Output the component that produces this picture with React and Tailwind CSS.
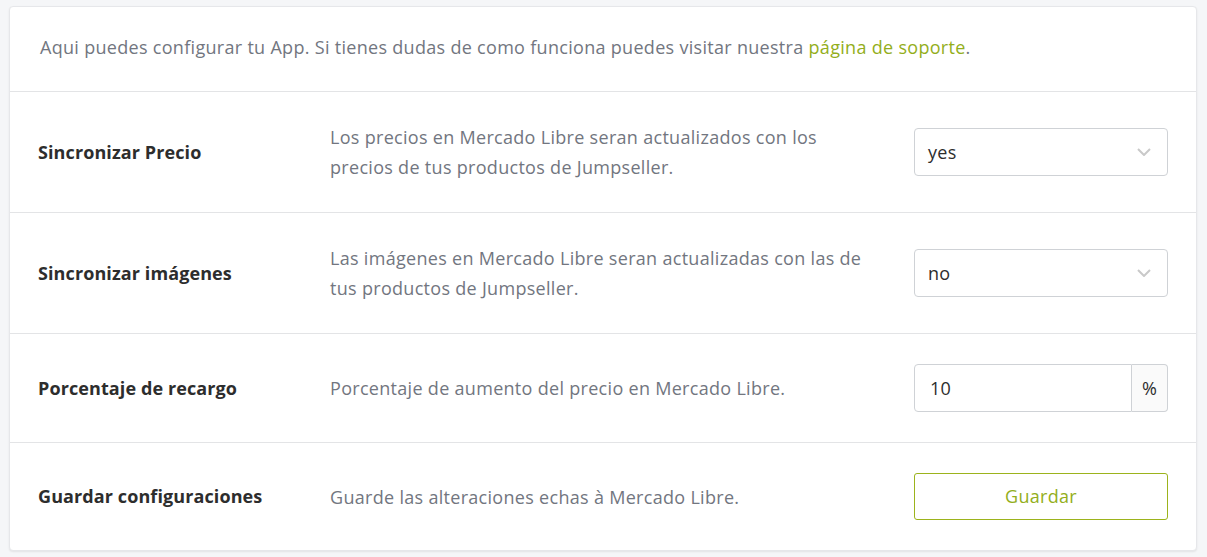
import React from "react";

const font = { fontFamily: "'Open Sans', Lato, sans-serif" };

function Chevron() {
  return (
    <svg width="14" height="8" viewBox="0 0 14 8" className="absolute right-[16px] top-1/2 -translate-y-1/2">
      <path d="M1 1l6 6 6-6" fill="none" stroke="#c9c9c9" strokeWidth="2" />
    </svg>
  );
}

function Select({ value }) {
  return (
    <div className="relative h-[48px] w-[254px] rounded-[4px] border border-[#cfd2d6] bg-white flex items-center pl-[13px] text-[18px] text-[#2d2d2d]">
      {value}
      <Chevron />
    </div>
  );
}

function Row({ label, desc, children, last }) {
  return (
    <div className={"flex items-center py-[30px] pl-[28px] pr-[28px] tracking-[0.3px] " + (last ? "" : "border-b border-[#e3e4e6]")}>
      <div className="w-[292px] shrink-0 text-[18px] font-bold tracking-[0.1px] text-[#2d2d2d]">{label}</div>
      <div className="flex-1 text-[18px] leading-[30px] text-[#727680] pr-[20px] whitespace-nowrap">{desc}</div>
      <div className="w-[254px] shrink-0">{children}</div>
    </div>
  );
}

export default function App() {
  return (
    <div className="min-h-[557px] bg-[#f5f6f8] pt-[6px] pl-[9px] pr-[10px] pb-[7px]" style={font}>
      <div className="bg-white rounded-[4px] border border-[#e6e7ea] shadow-[0_1px_2px_rgba(0,0,0,0.08)]">
        <div className="h-[85px] flex items-center pl-[30px] border-b border-[#e3e4e6] text-[18px] tracking-[0.3px] text-[#727680]">
          <span className="-mt-[4px]">
            Aqui puedes configurar tu App. Si tienes dudas de como funciona puedes visitar nuestra{" "}
            <a className="text-[#93ae1b]">página de soporte</a>.
          </span>
        </div>
        <Row
          label="Sincronizar Precio"
          desc={<>Los precios en Mercado Libre seran actualizados con los<br />precios de tus productos de Jumpseller.</>}
        >
          <Select value="yes" />
        </Row>
        <Row
          label="Sincronizar imágenes"
          desc={<>Las imágenes en Mercado Libre seran actualizadas con las de<br />tus productos de Jumpseller.</>}
        >
          <Select value="no" />
        </Row>
        <Row label="Porcentaje de recargo" desc="Porcentaje de aumento del precio en Mercado Libre.">
          <div className="flex h-[48px]">
            <div className="flex-1 rounded-l-[4px] border border-[#cfd2d6] flex items-center pl-[15px] text-[18px] text-[#2d2d2d]">10</div>
            <div className="w-[36px] rounded-r-[4px] border border-l-0 border-[#cfd2d6] bg-[#fafafa] flex items-center justify-center text-[18px] text-[#2d2d2d]">%</div>
          </div>
        </Row>
        <Row label="Guardar configuraciones" desc="Guarde las alteraciones echas à Mercado Libre." last>
          <button className="h-[47px] w-full rounded-[3px] border border-[#9cb31c] bg-white text-[18px] text-[#93ae1b]">Guardar</button>
        </Row>
      </div>
    </div>
  );
}
